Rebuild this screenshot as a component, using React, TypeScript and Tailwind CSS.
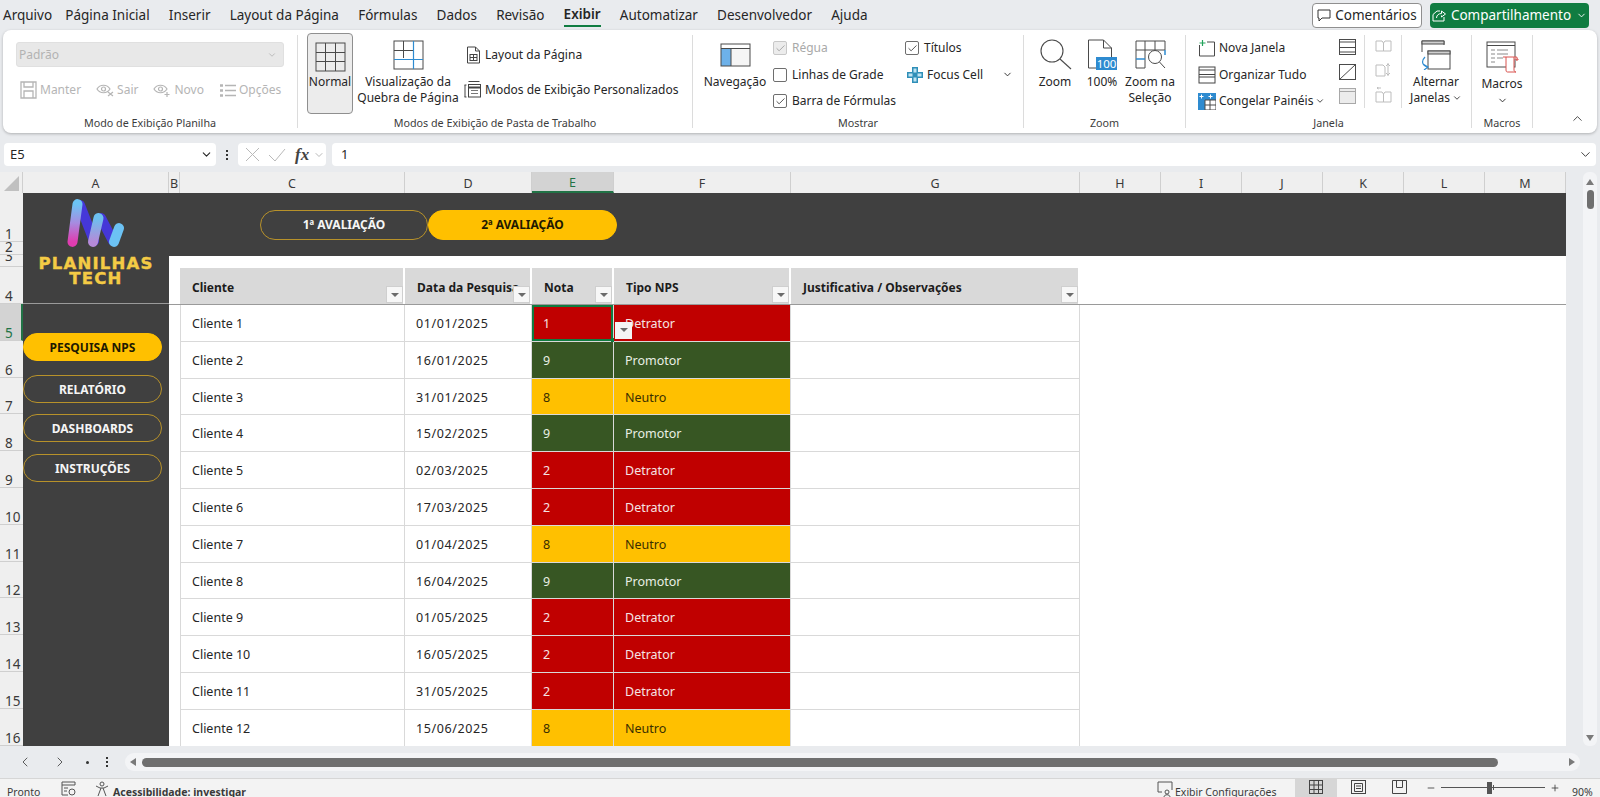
import { ReactNode } from "react";
import { Check, ChevronDown, ChevronLeft, ChevronRight, ChevronUp, Minus, Plus } from "lucide-react";

const tabs = ["Arquivo", "Página Inicial", "Inserir", "Layout da Página", "Fórmulas", "Dados", "Revisão", "Exibir", "Automatizar", "Desenvolvedor", "Ajuda"];

const columns = [
  { name: "A", width: "w-[146px]" },
  { name: "B", width: "w-[11px]" },
  { name: "C", width: "w-[225px]" },
  { name: "D", width: "w-[127px]" },
  { name: "E", width: "w-[82px]" },
  { name: "F", width: "w-[177px]" },
  { name: "G", width: "w-[289px]" },
  { name: "H", width: "w-[81px]" },
  { name: "I", width: "w-[81px]" },
  { name: "J", width: "w-[81px]" },
  { name: "K", width: "w-[81px]" },
  { name: "L", width: "w-[81px]" },
  { name: "M", width: "w-[81px]" },
];

const rowHeaders = [
  { n: 1, h: "h-[49px]" },
  { n: 2, h: "h-[13px]" },
  { n: 3, h: "h-[12px]" },
  { n: 4, h: "h-[37px]" },
  { n: 5, h: "h-[36.8px]" },
  { n: 6, h: "h-[36.8px]" },
  { n: 7, h: "h-[36.8px]" },
  { n: 8, h: "h-[36.8px]" },
  { n: 9, h: "h-[36.8px]" },
  { n: 10, h: "h-[36.8px]" },
  { n: 11, h: "h-[36.8px]" },
  { n: 12, h: "h-[36.8px]" },
  { n: 13, h: "h-[36.8px]" },
  { n: 14, h: "h-[36.8px]" },
  { n: 15, h: "h-[36.8px]" },
  { n: 16, h: "h-[36.8px]" },
];

const answers = [
  ["Cliente 1", "01/01/2025", 1, "Detrator"],
  ["Cliente 2", "16/01/2025", 9, "Promotor"],
  ["Cliente 3", "31/01/2025", 8, "Neutro"],
  ["Cliente 4", "15/02/2025", 9, "Promotor"],
  ["Cliente 5", "02/03/2025", 2, "Detrator"],
  ["Cliente 6", "17/03/2025", 2, "Detrator"],
  ["Cliente 7", "01/04/2025", 8, "Neutro"],
  ["Cliente 8", "16/04/2025", 9, "Promotor"],
  ["Cliente 9", "01/05/2025", 2, "Detrator"],
  ["Cliente 10", "16/05/2025", 2, "Detrator"],
  ["Cliente 11", "31/05/2025", 2, "Detrator"],
  ["Cliente 12", "15/06/2025", 8, "Neutro"],
] as const;

const toneByType: Record<string, string> = {
  Detrator: "bg-[#c00000] text-[#f5e3e3]",
  Promotor: "bg-[#375623] text-[#e9efe4]",
  Neutro: "bg-[#ffc000] text-[#3a2f00]",
};

// ---- ribbon icons ----
const IconNormal = () => (
  <svg width="31" height="30" viewBox="0 0 31 30" fill="none" stroke="#4a4a4a">
    <rect x="1" y="1" width="29" height="28" />
    <path d="M10.5 1v28M20.5 1v28M1 10.5h29M1 19.5h29" />
  </svg>
);
const IconBreak = () => (
  <svg width="31" height="30" viewBox="0 0 31 30" fill="none" stroke="#4a4a4a">
    <rect x="1" y="1" width="29" height="28" />
    <path d="M10.5 1v17M1 10.5h19" />
    <path d="M20.5 1v28M1 19.5h29" stroke="#2e8bd0" strokeWidth="1.2" />
  </svg>
);
const IconPageLayout = () => (
  <svg width="15" height="18" viewBox="0 0 15 18" fill="none" stroke="#444">
    <path d="M1.5 1h8l4 4v12h-12z" />
    <path d="M9.5 1v4h4" />
    <rect x="4" y="8.5" width="7" height="6" />
    <path d="M7.5 8.5v6M4 11.5h7" />
  </svg>
);
const IconCustomViews = () => (
  <svg width="18" height="19" viewBox="0 0 18 19" fill="none" stroke="#444">
    <path d="M4.5 1.5h11M1 5v12M.5 5h2M.5 17h2" />
    <rect x="4.5" y="4.5" width="12" height="12.5" />
    <path d="M4.5 7.5h12" strokeWidth="2" />
    <path d="M7 10.5h7M7 13.5h7" stroke="#777" />
  </svg>
);
const IconNav = () => (
  <svg width="31" height="24" viewBox="0 0 31 24" fill="none">
    <rect x="1" y="6" width="10" height="17" fill="#6db1e9" />
    <rect x="11" y="6" width="19" height="17" fill="#f5f5f5" />
    <rect x="1" y="1" width="29" height="22" stroke="#4a4a4a" />
    <path d="M1 5.500h29M11 6v17" stroke="#4a4a4a" />
  </svg>
);
const IconZoom = () => (
  <svg width="33" height="31" viewBox="0 0 33 31" fill="none" stroke="#4a4a4a" strokeWidth="1.1">
    <circle cx="13" cy="12" r="11" />
    <path d="M21 20l11 10" />
  </svg>
);
const IconHundred = () => (
  <svg width="30" height="31" viewBox="0 0 30 31" fill="none">
    <path d="M1.500 29V1h15l8 8v9M16.500 1v8h8M1.500 29h8" stroke="#4a4a4a" />
    <rect x="9" y="18" width="21" height="13" fill="#2e8bd0" />
    <text x="19.500" y="29" fontSize="11.500" textAnchor="middle" fill="#fff" fontFamily="'Noto Sans', sans-serif">100</text>
  </svg>
);
const IconZoomSel = () => (
  <svg width="31" height="30" viewBox="0 0 31 30" fill="none" stroke="#4a4a4a">
    <path d="M1 1h29v9H1zM1 10v18h9M10 1v27M20 1v9" />
    <path d="M10 19H1M30 10v5" stroke="#2e8bd0" strokeWidth="1.5" />
    <circle cx="20" cy="17" r="6.500" fill="#fff" />
    <path d="M24.500 22l5.500 6" />
  </svg>
);
const IconNewWindow = () => (
  <svg width="18" height="17" viewBox="0 0 18 17" fill="none">
    <path d="M1.500 5v11h15V2H9" stroke="#4a4a4a" />
    <path d="M4.500 0v6M1.500 3h6" stroke="#22a35b" strokeWidth="1.200" />
  </svg>
);
const IconArrange = () => (
  <svg width="18" height="18" viewBox="0 0 18 18" fill="none" stroke="#444">
    <rect x="1" y="1" width="16" height="16" />
    <path d="M1 4h16M1 8.500h16M1 11h16" />
  </svg>
);
const IconFreeze = () => (
  <svg width="18" height="17" viewBox="0 0 18 17" fill="none">
    <rect x="0" y="0" width="7" height="7" fill="#2e8bd0" />
    <rect x="0" y="7" width="7" height="10" fill="#2e8bd0" />
    <rect x="7" y="0" width="11" height="7" fill="#2e8bd0" />
    <path d="M7 7h11v10H7zM12 7v10M7 12h11" stroke="#4a4a4a" />
    <path d="M3.500 1.500v4M1.500 3.500h4M12.500 1.500v4M10.500 3.500h4" stroke="#fff" />
  </svg>
);
const IconPaneSplit = () => (
  <svg width="17" height="16" viewBox="0 0 17 16" fill="none" stroke="#4a4a4a">
    <rect x=".5" y=".5" width="16" height="15" />
    <path d="M.5 3h16M.5 8.500h16M.5 13h16" />
  </svg>
);
const IconPaneHide = () => (
  <svg width="17" height="16" viewBox="0 0 17 16" fill="none" stroke="#4a4a4a">
    <rect x=".5" y=".5" width="16" height="15" />
    <path d="M.5 15.500L16.500.5" />
  </svg>
);
const IconPaneShow = () => (
  <svg width="17" height="16" viewBox="0 0 17 16" fill="#ececec" stroke="#a8a8a8">
    <rect x=".5" y=".5" width="16" height="15" />
    <path d="M.5 3.500h16" />
  </svg>
);
const IconSideBySide = () => (
  <svg width="17" height="12" viewBox="0 0 17 12" fill="none" stroke="#bdbdbd">
    <path d="M1 1h6l1.500 2V11H1zM16 1h-6L8.500 3v8H16z" />
  </svg>
);
const IconSyncScroll = () => (
  <svg width="16" height="16" viewBox="0 0 16 16" fill="none" stroke="#bdbdbd">
    <path d="M1 3h7l2 2v9H1zM13 1v13" />
    <path d="M11 4l2-2 2 2M11 11l2 2 2-2" />
  </svg>
);
const IconReset = () => (
  <svg width="17" height="16" viewBox="0 0 17 16" fill="none" stroke="#bdbdbd">
    <path d="M1 5h6l1.500 2v8H1zM16 5h-6L8.500 7v8H16zM6 1H2M3.500 0L2 1l1.500 1" />
  </svg>
);
const IconSwitch = () => (
  <svg width="32" height="30" viewBox="0 0 32 30" fill="none">
    <path d="M2 12V1h22v4" stroke="#4a4a4a" />
    <rect x="2" y="1" width="22" height="3" fill="#d0d0d0" stroke="#4a4a4a" />
    <rect x="8" y="11" width="22" height="18" fill="#fff" stroke="#4a4a4a" />
    <rect x="8" y="11" width="22" height="3" fill="#d0d0d0" stroke="#4a4a4a" />
    <path d="M5 17c-4 4-3 9 3 10M3 24l5 3-4 3" stroke="#2e8bd0" strokeWidth="1.200" />
  </svg>
);
const IconMacros = () => (
  <svg width="33" height="32" viewBox="0 0 33 32" fill="none">
    <rect x="1" y="1" width="28" height="25" stroke="#4a4a4a" />
    <path d="M1 4.500h28" stroke="#4a4a4a" />
    <path d="M5 9h4M11 9h11M5 13h4M11 13h11M5 17h4M11 17h6M5 21h4" stroke="#8a8a8a" />
    <path d="M17 16h13v3h2v-1M20 16v13c0 2 1 2 2 2h8c-1 0-2-1-2-2V16" fill="#fff" stroke="#d9534f" />
    <path d="M30 16c2 0 2 3 0 3" stroke="#d9534f" />
  </svg>
);

const DiskIcon = () => (
  <svg width="17" height="18" viewBox="0 0 17 18" fill="none" stroke="#b5b5b5" strokeWidth="1.300">
    <path d="M1 1h15v16H1zM4 1v5h9V1M4 17v-7h9v7" />
  </svg>
);
const EyeIcon = ({ mark }: { mark: ReactNode }) => (
  <svg width="18" height="14" viewBox="0 0 18 14" fill="none" stroke="#b5b5b5" strokeWidth="1.200">
    <path d="M1 6c3-5 10-5 13 0-3 5-10 5-13 0z" />
    <circle cx="7.500" cy="6" r="2" />
    {mark}
  </svg>
);
const ListIcon = () => (
  <svg width="17" height="15" viewBox="0 0 17 15" fill="none" stroke="#b5b5b5" strokeWidth="1.500">
    <path d="M6 2.500h11M6 7.500h11M6 12.500h11" />
    <path d="M1 2.500h3M1 7.500h3M1 12.500h3" strokeWidth="2.500" />
  </svg>
);
const FocusCellIcon = () => (
  <svg width="16" height="16" viewBox="0 0 16 16">
    <path d="M5 0h6v5h5v6h-5v5H5v-5H0V5h5z" fill="#2f8fb8" />
    <path d="M6.500 1.500h3v4h-3zM6.500 10.500h3v4h-3zM1.500 6.500h4v3h-4zM10.500 6.500h4v3h-4z" fill="#bfe3f2" />
  </svg>
);

// ---- small pieces ----
const CheckBox = ({ checked, disabled }: { checked: boolean; disabled?: boolean }) => (
  <span className={`flex h-[14px] w-[14px] items-center justify-center rounded-[2px] border ${disabled ? "border-[#c8c8c8] bg-[#ececec] text-[#9a9a9a]" : "border-[#6e6e6e] bg-white text-[#333]"}`}>
    {checked && <Check size={11} strokeWidth={1.800} />}
  </span>
);

const CheckRow = ({ label, checked, disabled }: { label: string; checked: boolean; disabled?: boolean }) => (
  <div className={`flex h-[26.5px] items-center gap-[5px] ${disabled ? "text-[#a9a9a9]" : ""}`}>
    <CheckBox checked={checked} disabled={disabled} />
    <span>{label}</span>
  </div>
);

const BigButton = ({ icon, lines, className }: { icon: ReactNode; lines: ReactNode[]; className: string }) => (
  <div className={`flex shrink-0 flex-col items-center ${className}`}>
    <div className="flex h-[39px] items-center">{icon}</div>
    {lines.map((line, i) => (
      <div key={i} className="flex h-[16px] items-center whitespace-nowrap leading-[16px]">
        {line}
      </div>
    ))}
  </div>
);

const SmallRow = ({ icon, label, iconBox = "w-[18px]" }: { icon: ReactNode; label: ReactNode; iconBox?: string }) => (
  <div className="flex h-[26.5px] items-center gap-[3px] whitespace-nowrap">
    <span className={`flex justify-center ${iconBox}`}>{icon}</span>
    {label}
  </div>
);

const RibbonGroup = ({ label, className, children }: { label: string; className: string; children: ReactNode }) => (
  <div className={`flex h-[93px] shrink-0 flex-col border-r border-[#dcdcdc] ${className}`}>
    <div className="flex h-[83px]">{children}</div>
    <div className="flex h-[10px] items-center justify-center whitespace-nowrap text-[10.75px] leading-[14px] text-[#3c3c3c]">{label}</div>
  </div>
);

const GhostTool = ({ icon, label }: { icon: ReactNode; label: string }) => (
  <span className="flex items-center gap-[3px]">
    {icon}
    {label}
  </span>
);

const FilterButton = () => (
  <span className="absolute bottom-[1px] right-[0px] flex h-[17px] w-[17px] items-center justify-center border border-[#cfcfcf] bg-[#f7f7f7]">
    <span className="h-0 w-0 border-x-[4px] border-t-[4px] border-x-transparent border-t-[#6b6b6b]" />
  </span>
);

const Pill = ({ label, active, className }: { label: string; active?: boolean; className: string }) => (
  <div className={`flex items-center justify-center rounded-full border pt-[1px] text-[12px] font-bold ${active ? "border-[#ffc000] bg-[#ffc000] text-[#1f1a00]" : "border-[#b8922a] bg-transparent text-[#f5f5f5]"} ${className}`}>
    {label}
  </div>
);

const Logo = () => (
  <svg width="58" height="50" viewBox="0 0 58 50" fill="none" strokeLinecap="round" strokeWidth="10">
    <defs>
      <linearGradient id="bar1" x1="0" y1="1" x2="0" y2="0">
        <stop offset="0" stopColor="#e03cb0" />
        <stop offset="0.500" stopColor="#a78be0" />
        <stop offset="1" stopColor="#6cc4f5" />
      </linearGradient>
      <linearGradient id="bar2" x1="0" y1="1" x2="0" y2="0">
        <stop offset="0" stopColor="#b58ad8" />
        <stop offset="1" stopColor="#6cc0f0" />
      </linearGradient>
    </defs>
    <path d="M13 7L27 43M34 20L46 43" stroke="#4537d8" />
    <path d="M5.500 43.900L10.500 6.100" stroke="url(#bar1)" />
    <path d="M26 43.900L31.500 20.100" stroke="url(#bar2)" />
    <path d="M47 43.900L52 30.100" stroke="#6cc2f4" />
  </svg>
);

const ColumnKey = ({ children, className }: { children: ReactNode; className: string }) => (
  <div className={`flex items-center justify-center pt-[3px] ${className}`}>{children}</div>
);

export default function App() {
  return (
    <div className="flex h-[797px] w-[1600px] flex-col overflow-hidden bg-[#e9ebee] font-['Noto_Sans',sans-serif] text-[#262626]">
      {/* Tabs row */}
      <div className="flex h-[30px] shrink-0 items-center justify-between pl-[3px] pr-[11px]">
        <div className="flex items-center gap-[19.2px] text-[13.5px]">
          {tabs.map((t, i) => (
            <span key={t} className={`${t === "Exibir" ? "border-b-2 border-[#107c41] font-semibold" : ""} ${i === 1 ? "-ml-[6px]" : ""} leading-[22px]`}>
              {t}
            </span>
          ))}
        </div>
        <div className="flex items-center gap-[8px] text-[13.5px]">
          <div className="flex h-[25px] w-[110px] items-center justify-center gap-[4px] rounded-[4px] border border-[#8f8f8f] bg-white">
            <svg width="14" height="13" viewBox="0 0 14 13" fill="none" stroke="#333">
              <path d="M1 1h12v8H5l-3 3V9H1z" />
            </svg>
            Comentários
          </div>
          <div className="flex h-[25px] w-[159px] items-center justify-center gap-[5px] rounded-[4px] bg-[#107c41] text-white">
            <svg width="14" height="13" viewBox="0 0 14 13" fill="none" stroke="#fff">
              <path d="M1 5.500L5 2h3M1 5.500V12h11V8M4.500 9c0-3 2.500-4.500 5-4.500V2l4 3-4 3V6.500" />
            </svg>
            Compartilhamento
            <ChevronDown size={11} />
          </div>
        </div>
      </div>

      {/* Ribbon */}
      <div className="mx-[3px] flex h-[103px] shrink-0 rounded-[8px] bg-white py-[5px] text-[12px] shadow-[0_1px_3px_rgba(0,0,0,0.25)]">
        <RibbonGroup label="Modo de Exibição Planilha" className="w-[295px]">
          <div className="flex flex-1 flex-col px-[13px] pt-[7px]">
            <div className="flex h-[25px] items-center justify-between rounded-[3px] border border-[#e0e0e0] bg-[#e8e8e8] pl-[2px] pr-[6px] text-[#b3b3b3]">
              Padrão
              <ChevronDown size={10} />
            </div>
            <div className="mt-[14px] flex items-center gap-[15px] pl-[4px] text-[#b5b5b5]">
              <GhostTool icon={<DiskIcon />} label="Manter" />
              <GhostTool icon={<EyeIcon mark={<path d="M12 9l5 4M17 9l-5 4" />} />} label="Sair" />
              <GhostTool icon={<EyeIcon mark={<path d="M14 9v5M11.500 11.500h5" />} />} label="Novo" />
              <GhostTool icon={<ListIcon />} label="Opções" />
            </div>
          </div>
        </RibbonGroup>

        <RibbonGroup label="Modos de Exibição de Pasta de Trabalho" className="w-[395px]">
          <div className="ml-[9px] -mt-[2px] flex h-[81px] w-[46px] flex-col items-center rounded-[4px] border border-[#8f8f8f] bg-[#ececec] pt-[5px]">
            <div className="flex h-[35px] items-center">
              <IconNormal />
            </div>
            <div className="leading-[16px]">Normal</div>
          </div>
          <BigButton icon={<IconBreak />} lines={["Visualização da", "Quebra de Página"]} className="ml-[2px] w-[106px]" />
          <div className="ml-[3px] flex flex-col pt-[7px]">
            <SmallRow icon={<IconPageLayout />} label="Layout da Página" />
            <div className="mt-[8px]">
              <SmallRow icon={<IconCustomViews />} label="Modos de Exibição Personalizados" />
            </div>
          </div>
        </RibbonGroup>

        <RibbonGroup label="Mostrar" className="w-[331px]">
          <BigButton icon={<IconNav />} lines={["Navegação"]} className="ml-[10px] w-[64px]" />
          <div className="ml-[6px] flex w-[132px] flex-col">
            <CheckRow label="Régua" checked disabled />
            <CheckRow label="Linhas de Grade" checked={false} />
            <CheckRow label="Barra de Fórmulas" checked />
          </div>
          <div className="flex flex-col">
            <CheckRow label="Títulos" checked />
            <div className="ml-[2px] flex h-[26.5px] items-center gap-[4px]">
              <FocusCellIcon />
              Focus Cell
              <ChevronDown size={11} className="ml-[15px]" />
            </div>
          </div>
        </RibbonGroup>

        <RibbonGroup label="Zoom" className="w-[162px]">
          <BigButton icon={<IconZoom />} lines={["Zoom"]} className="ml-[13px] w-[36px]" />
          <BigButton icon={<IconHundred />} lines={["100%"]} className="ml-[11px] w-[36px]" />
          <BigButton icon={<IconZoomSel />} lines={["Zoom na", "Seleção"]} className="ml-[5px] w-[50px]" />
        </RibbonGroup>

        <RibbonGroup label="Janela" className="w-[286px]">
          <div className="ml-[12px] flex w-[139px] flex-col">
            <SmallRow icon={<IconNewWindow />} label="Nova Janela" />
            <SmallRow icon={<IconArrange />} label="Organizar Tudo" />
            <SmallRow
              icon={<IconFreeze />}
              label={
                <span className="flex items-center gap-[2px]">
                  Congelar Painéis <ChevronDown size={10} />
                </span>
              }
            />
          </div>
          <div className="flex h-[73px] w-[28px] flex-col items-start justify-between border-r border-[#dcdcdc] py-[4px] pl-[2px]">
            <IconPaneSplit />
            <IconPaneHide />
            <IconPaneShow />
          </div>
          <div className="flex h-[73px] w-[37px] flex-col items-center justify-between border-r border-[#dcdcdc] py-[5px]">
            <IconSideBySide />
            <IconSyncScroll />
            <IconReset />
          </div>
          <BigButton
            icon={<IconSwitch />}
            lines={[
              "Alternar",
              <span key="j" className="flex items-center gap-[2px]">
                Janelas <ChevronDown size={10} />
              </span>,
            ]}
            className="ml-[8px] w-[52px]"
          />
        </RibbonGroup>

        <RibbonGroup label="Macros" className="w-[61px]">
          <div className="pt-[2px]">
            <BigButton icon={<IconMacros />} lines={["Macros", <ChevronDown key="c" size={11} />]} className="w-[60px]" />
          </div>
        </RibbonGroup>

        <div className="flex flex-1 items-end justify-end pb-[2px] pr-[12px]">
          <ChevronUp size={15} strokeWidth={1.300} />
        </div>
      </div>

      {/* Formula bar */}
      <div className="mx-[4px] mt-[10px] flex h-[23px] shrink-0 items-center text-[13px]">
        <div className="flex h-full w-[212px] items-center justify-between rounded-[4px] bg-white pl-[6px] pr-[3px]">
          E5
          <ChevronDown size={13} />
        </div>
        <span className="flex w-[22px] flex-col items-center gap-[2px]">
          <span className="h-[2px] w-[2px] bg-[#333]" />
          <span className="h-[2px] w-[2px] bg-[#333]" />
          <span className="h-[2px] w-[2px] bg-[#333]" />
        </span>
        <div className="flex h-full w-[88px] items-center rounded-[4px] bg-white pl-[7px] text-[#b9b9b9]">
          <svg width="15" height="15" viewBox="0 0 15 15" fill="none" stroke="#b9b9b9">
            <path d="M1 1l13 13M14 1L1 14" />
          </svg>
          <svg className="ml-[8px]" width="18" height="14" viewBox="0 0 18 14" fill="none" stroke="#b9b9b9">
            <path d="M1 7l6 6L17 1" />
          </svg>
          <span className="ml-[9px] font-['Liberation_Serif',serif] text-[17px] font-bold italic leading-none text-[#444]">fx</span>
          <ChevronDown size={12} className="ml-[4px]" />
        </div>
        <div className="ml-[6px] flex h-full flex-1 items-center justify-between rounded-[4px] bg-white pl-[9px] pr-[3px]">
          1
          <ChevronDown size={15} strokeWidth={1.400} />
        </div>
      </div>

      {/* Grid area with the vertical scrollbar running beside headers and cells */}
      <div className="mt-[6px] flex h-[574px] shrink-0">
        <div className="flex w-[1566px] shrink-0 flex-col">
          {/* Column headers */}
          <div className="flex h-[21px] shrink-0 bg-[#efefef] text-[12.5px] text-[#3a3a3a]">
            <div className="flex w-[23px] items-end justify-end border-r border-[#cfcfcf] pb-[2px] pr-[3px]">
              <span className="h-0 w-0 border-b-[15px] border-l-[15px] border-b-[#c0c0c0] border-l-transparent" />
            </div>
            {columns.map((c) =>
              c.name === "E" ? (
                <ColumnKey key={c.name} className={`${c.width} border-b-2 border-r border-[#217346] border-r-[#cfcfcf] bg-[#d3d3d3] text-[#217346]`}>
                  {c.name}
                </ColumnKey>
              ) : (
                <ColumnKey key={c.name} className={`${c.width} border-r border-[#cfcfcf]`}>
                  {c.name}
                </ColumnKey>
              )
            )}
          </div>

          {/* Sheet */}
          <div className="flex h-[553px] shrink-0 overflow-hidden">
            <div className="w-[23px] shrink-0 overflow-hidden bg-[#efefef] text-[13.5px] leading-[14px] text-[#3a3a3a]">
              {rowHeaders.map((r) => (
                <div
                  key={r.n}
                  className={`flex overflow-hidden border-b border-[#cfcfcf] pl-[5px] ${r.n === 3 ? "items-start" : "items-end"} ${r.h} ${r.n === 5 ? "border-r-2 border-r-[#217346] bg-[#d3d3d3] text-[#217346]" : ""}`}
                >
                  <span className={r.n === 3 ? "-mt-[6px]" : ""}>{r.n}</span>
                </div>
              ))}
            </div>

            {/* Side menu */}
            <div className="w-[146px] shrink-0 bg-[#404040]">
              <div className="flex h-[111px] flex-col items-center border-b border-[#9a9a9a] pt-[5px]">
                <Logo />
                <div className="mt-[8px] whitespace-nowrap text-center font-['DejaVu_Sans',sans-serif] text-[16.5px] font-bold leading-[15px] tracking-[1.2px] text-[#f4cb45] [-webkit-text-stroke:0.4px_#f4cb45]">
                  PLANILHAS
                  <br />
                  TECH
                </div>
              </div>
              <div className="flex w-[139px] flex-col pt-[29px]">
                <Pill label="PESQUISA NPS" active className="h-[28px]" />
                <Pill label="RELATÓRIO" className="mt-[14px] h-[28px]" />
                <Pill label="DASHBOARDS" className="mt-[11px] h-[28px]" />
                <Pill label="INSTRUÇÕES" className="mt-[12px] h-[28px]" />
              </div>
            </div>

            <div className="flex min-w-0 flex-1 flex-col bg-white">
              {/* Evaluation switcher */}
              <div className="flex h-[63px] shrink-0 items-center bg-[#404040] pl-[91px]">
                <Pill label="1ª AVALIAÇÃO" className="h-[30px] w-[168px]" />
                <Pill label="2ª AVALIAÇÃO" active className="h-[30px] w-[189px]" />
              </div>
              <div className="h-[12px] shrink-0" />

              {/* Table header */}
              <div className="flex h-[37px] shrink-0 border-b border-[#9a9a9a] pl-[11px] text-[12px] font-bold text-[#1c1c1c]">
                {[
                  { label: "Cliente", w: "w-[225px]" },
                  { label: "Data da Pesquisa", w: "w-[127px]" },
                  { label: "Nota", w: "w-[82px]" },
                  { label: "Tipo NPS", w: "w-[177px]" },
                  { label: "Justificativa / Observações", w: "w-[289px]" },
                ].map((h) => (
                  <div key={h.label} className={`relative flex items-center overflow-hidden whitespace-nowrap border-r-2 border-white bg-[#d9d9d9] pl-[12px] pt-[3px] ${h.w}`}>
                    {h.label}
                    <FilterButton />
                  </div>
                ))}
              </div>

              {/* Table body */}
              <div className="pl-[11px] text-[12.5px]">
                {answers.map(([client, date, score, type], i) => (
                  <div key={client} className="flex h-[36.8px]">
                    <div className="flex w-[225px] items-center border-b border-l border-r border-[#d9d9d9] pl-[11px] pt-[3px]">{client}</div>
                    <div className="flex w-[127px] items-center border-b border-r border-[#d9d9d9] pl-[11px] pt-[3px] tracking-[0.6px]">{date}</div>
                    <div className={`relative flex w-[82px] items-center border-b border-r border-[#d9d9d9] pl-[11px] pt-[3px] ${toneByType[type]}`}>
                      {score}
                      {i === 0 && (
                        <>
                          <span className="absolute inset-0 border-2 border-[#107c41]" />
                          <span className="absolute -bottom-[2px] -right-[3px] h-[5px] w-[5px] bg-[#107c41]" />
                        </>
                      )}
                    </div>
                    <div className={`relative flex w-[177px] items-center border-b border-r border-[#d9d9d9] pl-[11px] pt-[3px] ${toneByType[type]}`}>
                      {type}
                      {i === 0 && (
                        <span className="absolute bottom-[2px] left-[1px] flex h-[17px] w-[17px] items-center justify-center bg-[#f4f4f4]">
                          <span className="h-0 w-0 border-x-[4px] border-t-[4px] border-x-transparent border-t-[#6b6b6b]" />
                        </span>
                      )}
                    </div>
                    <div className="w-[289px] border-b border-r border-[#d9d9d9]" />
                  </div>
                ))}
              </div>
            </div>
          </div>
        </div>

        {/* Vertical scrollbar */}
        <div className="flex w-[34px] shrink-0 justify-end pr-[3px]">
          <div className="flex h-full w-[14px] flex-col items-center justify-between rounded-[6px] bg-[#f3f4f6] pb-[5px] pt-[7px]">
            <div className="flex w-full flex-col items-center">
              <span className="h-0 w-0 border-x-[4px] border-b-[6px] border-x-transparent border-b-[#7a7a7a]" />
              <span className="mt-[5px] h-[19px] w-[7px] rounded-full bg-[#6f6f6f]" />
            </div>
            <span className="h-0 w-0 border-x-[4px] border-t-[6px] border-x-transparent border-t-[#7a7a7a]" />
          </div>
        </div>
      </div>

      {/* Sheet tabs / horizontal scrollbar */}
      <div className="flex h-[33px] shrink-0 items-start border-b border-[#d6d6d6] pt-[7px]">
        <div className="flex h-[18px] w-[125px] items-center text-[#444]">
          <ChevronLeft size={16} strokeWidth={1.300} className="ml-[17px]" />
          <ChevronRight size={16} strokeWidth={1.300} className="ml-[19px]" />
          <span className="ml-[18px] h-[3px] w-[3px] rounded-full bg-[#333]" />
          <span className="ml-[17px] flex flex-col gap-[2px]">
            <span className="h-[2px] w-[2px] bg-[#333]" />
            <span className="h-[2px] w-[2px] bg-[#333]" />
            <span className="h-[2px] w-[2px] bg-[#333]" />
          </span>
        </div>
        <div className="flex h-[18px] w-[1455px] items-center rounded-[9px] bg-[#f3f4f6] pl-[5px] pr-[5px]">
          <span className="h-0 w-0 border-y-[4px] border-r-[6px] border-y-transparent border-r-[#7a7a7a]" />
          <span className="ml-[6px] h-[9px] w-[1356px] rounded-full bg-[#6f6f6f]" />
          <span className="ml-auto h-0 w-0 border-y-[4px] border-l-[6px] border-y-transparent border-l-[#7a7a7a]" />
        </div>
      </div>

      {/* Status bar */}
      <div className="flex h-[18px] shrink-0 items-start overflow-hidden bg-[#f3f3f3] pl-[7px] text-[10.5px] leading-[26px] text-[#3a3a3a]">
        <span className="w-[54px]">Pronto</span>
        <svg className="mt-[2px]" width="15" height="16" viewBox="0 0 15 16" fill="none" stroke="#555">
          <path d="M1 1h13v3H1zM1 4v10h6M3 7h4M3 10h3" />
          <circle cx="11" cy="11" r="3" />
        </svg>
        <svg className="ml-[19px] mt-[2px]" width="14" height="16" viewBox="0 0 14 16" fill="none" stroke="#555">
          <circle cx="7" cy="3" r="2" />
          <path d="M1 5l4 2h4l4-2M6 7l-3 8M8 7l3 8" />
        </svg>
        <span className="ml-[4px] font-bold">Acessibilidade: investigar</span>
        <div className="ml-auto flex items-start">
          <svg className="mt-[2px]" width="16" height="16" viewBox="0 0 16 16" fill="none" stroke="#555">
            <path d="M5 11H1V1h14v8" />
            <circle cx="10" cy="11" r="2" />
            <path d="M7 16c0-3 6-3 6 0" />
          </svg>
          <span className="ml-[2px] w-[120px]">Exibir Configurações</span>
          <div className="flex h-[18px] w-[42px] justify-center bg-[#d6d6d6] pt-[1px]">
            <svg width="14" height="14" viewBox="0 0 14 14" fill="none" stroke="#444">
              <rect x=".5" y=".5" width="13" height="13" />
              <path d="M5 .5v13M9.500 .5v13M.5 5h13M.5 9.500h13" />
            </svg>
          </div>
          <svg className="ml-[14px] mt-[1px]" width="15" height="14" viewBox="0 0 15 14" fill="none" stroke="#444">
            <rect x=".5" y=".5" width="14" height="13" />
            <path d="M3.500 3.500h8v8h-8zM5 6h5M5 8.500h5" />
          </svg>
          <svg className="ml-[26px] mt-[1px]" width="15" height="14" viewBox="0 0 15 14" fill="none" stroke="#444">
            <path d="M.5 13.500V.5h14v13zM4.500 .5v7h6v-7" />
          </svg>
          <Minus size={10} className="ml-[19px] mt-[4px]" />
          <div className="ml-[5px] mt-[8px] flex h-px w-[104px] items-center bg-[#555]">
            <span className="ml-[46px] h-[12px] w-[5px] bg-[#555]" />
            <span className="ml-[1px] h-[5px] w-px bg-[#555]" />
          </div>
          <Plus size={10} className="ml-[5px] mt-[4px]" />
          <span className="ml-[12px] w-[28px]">90%</span>
        </div>
      </div>
    </div>
  );
}
